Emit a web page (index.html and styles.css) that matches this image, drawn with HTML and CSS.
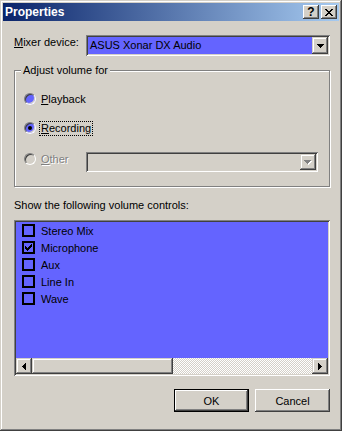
FILE: index.html
```html
<!DOCTYPE html>
<html lang="en">
<head>
    <meta charset="UTF-8">
    <title>Properties</title>
    <link rel="stylesheet" href="styles.css">
</head>
<body>
<div class="window">
    <div class="titlebar">
        <span class="title">Properties</span>
        <div class="caption-buttons">
            <div class="cap-btn">?</div>
            <div class="cap-btn">
                <svg width="8" height="7" viewBox="0 0 8 7"><path d="M0 0h2v1h-2z M6 0h2v1h-2z M1 1h2v1h-2z M5 1h2v1h-2z M2 2h4v1h-4z M3 3h2v1h-2z M2 4h4v1h-4z M1 5h2v1h-2z M5 5h2v1h-2z M0 6h2v1h-2z M6 6h2v1h-2z" fill="#000"/></svg>
            </div>
        </div>
    </div>

    <div class="content">
        <div class="mixer-row">
            <span class="mixer-label"><u>M</u>ixer device:</span>
            <div class="combo">
                <span class="combo-text">ASUS Xonar DX Audio</span>
                <span class="drop-btn">
                    <svg width="7" height="4" viewBox="0 0 7 4"><path d="M0 0h7v1h-1v1h-1v1h-1v1h-1v-1h-1v-1h-1v-1h-1z" fill="#000"/></svg>
                </span>
            </div>
        </div>

        <div class="group">
            <span class="legend">Adjust volume for</span>
            <div class="radio-row first">
                <span class="radio"></span>
                <span class="opt-label"><u>P</u>layback</span>
            </div>
            <div class="radio-row">
                <span class="radio checked"></span>
                <span class="opt-label focus"><u>R</u>ecording</span>
            </div>
            <div class="radio-row other">
                <div class="opt">
                    <span class="radio disabled"></span>
                    <span class="opt-label dim"><u>O</u>ther</span>
                </div>
                <div class="combo combo-off">
                    <span class="combo-text"></span>
                    <span class="drop-btn">
                        <svg width="8" height="5" viewBox="0 0 8 5"><path d="M1 1h7v1h-1v1h-1v1h-1v1h-1v-1h-1v-1h-1v-1h-1z" fill="#fff"/><path d="M0 0h7v1h-1v1h-1v1h-1v1h-1v-1h-1v-1h-1v-1h-1z" fill="#808080"/></svg>
                    </span>
                </div>
            </div>
        </div>

        <div class="list-caption">Show the following volume controls:</div>

        <div class="list">
            <div class="items">
                <div class="item"><span class="check"></span>Stereo Mix</div>
                <div class="item"><span class="check">
                    <svg width="7" height="7" viewBox="0 0 7 7"><path d="M6 0h1v1h-1z M5 1h2v1h-2z M0 2h1v1h-1z M4 2h3v1h-3z M0 3h2v1h-2z M3 3h3v1h-3z M0 4h5v1h-5z M1 5h3v1h-3z M2 6h1v1h-1z" fill="#000"/></svg>
                </span>Microphone</div>
                <div class="item"><span class="check"></span>Aux</div>
                <div class="item"><span class="check"></span>Line In</div>
                <div class="item"><span class="check"></span>Wave</div>
            </div>
            <div class="hscroll">
                <span class="sb-btn">
                    <svg width="4" height="7" viewBox="0 0 4 7"><path d="M0 3h1v-1h1v-1h1v-1h1v7h-1v-1h-1v-1h-1v-1h-1z" fill="#000"/></svg>
                </span>
                <span class="sb-thumb"></span>
                <span class="sb-track"></span>
                <span class="sb-btn">
                    <svg width="4" height="7" viewBox="0 0 4 7"><path d="M0 0h1v1h1v1h1v1h1v1h-1v1h-1v1h-1v1h-1z" fill="#000"/></svg>
                </span>
            </div>
        </div>

        <div class="buttons">
            <div class="btn default">OK</div>
            <div class="btn">Cancel</div>
        </div>
    </div>
</div>
</body>
</html>
```

FILE: styles.css
```css
body {
    margin: 0;
    background: #d4d0c8;
    font-family: "Liberation Sans", Arial, sans-serif;
    font-size: 11px;
    color: #000;
}

.window {
    width: 342px;
    height: 431px;
    box-sizing: border-box;
    padding: 3px;
    background: #d4d0c8;
    box-shadow: inset -1px -1px #404040, inset 1px 1px #d4d0c8,
                inset -2px -2px #808080, inset 2px 2px #fff;
    display: flex;
    flex-direction: column;
}

.titlebar {
    height: 18px;
    flex-shrink: 0;
    display: flex;
    align-items: center;
    justify-content: space-between;
    padding-left: 2px;
    background: linear-gradient(to right, #0a246a, #a6caf0);
}
.title {
    color: #fff;
    font-weight: bold;
    font-size: 12px;
}
.caption-buttons {
    display: flex;
    gap: 2px;
    margin-right: 2px;
}
.cap-btn {
    width: 16px;
    height: 14px;
    display: flex;
    align-items: center;
    justify-content: center;
    background: #d4d0c8;
    font-weight: bold;
    font-size: 12px;
    line-height: 12px;
    box-shadow: inset -1px -1px #404040, inset 1px 1px #fff,
                inset -2px -2px #808080, inset 2px 2px #d4d0c8;
}

.content {
    display: flex;
    flex-direction: column;
    padding: 14px 9px 0 11px;
}

/* mixer device */
.mixer-row {
    display: flex;
    height: 21px;
}
.mixer-label {
    width: 72px;
    line-height: 13px;
    margin-top: 1px;
}
.combo {
    width: 244px;
    height: 21px;
    box-sizing: border-box;
    padding: 2px;
    display: flex;
    box-shadow: inset 1px 1px #808080, inset -1px -1px #fff,
                inset 2px 2px #404040, inset -2px -2px #d4d0c8;
}
.combo-text {
    flex: 1;
    background: #6464ff;
    padding-left: 2px;
    line-height: 17px;
}
.drop-btn {
    width: 16px;
    height: 17px;
    display: flex;
    align-items: center;
    justify-content: center;
    background: #d4d0c8;
    box-shadow: inset -1px -1px #404040, inset 1px 1px #d4d0c8,
                inset -2px -2px #808080, inset 2px 2px #fff;
}
.combo-off {
    width: 232px;
    height: 20px;
}
.combo-off .combo-text {
    background: #d4d0c8;
}
.combo-off .drop-btn {
    height: 16px;
}

/* adjust volume group */
.group {
    margin-top: 14px;
    height: 117px;
    box-sizing: border-box;
    border: 1px solid #808080;
    box-shadow: inset 1px 1px #fff, 1px 1px #fff;
    display: flex;
    flex-direction: column;
}
.legend {
    align-self: flex-start;
    margin: -7px 0 0 6px;
    padding: 0 2px;
    line-height: 13px;
    background: #d4d0c8;
}
.radio-row {
    display: flex;
    align-items: center;
    height: 20px;
    padding-left: 9px;
    margin-top: 9px;
}
.radio-row.first {
    margin-top: 12px;
}
.radio-row.other {
    align-items: flex-start;
    margin-top: 14px;
}
.opt {
    width: 62px;
    height: 14px;
    display: flex;
    align-items: center;
}
.radio {
    width: 12px;
    height: 12px;
    box-sizing: border-box;
    border-radius: 50%;
    border: 1px solid;
    border-color: #808080 #fff #fff #808080;
    box-shadow: inset 1px 1px #404040, inset -1px -1px #d4d0c8;
    background: #6464ff;
    display: flex;
    align-items: center;
    justify-content: center;
    flex-shrink: 0;
}
.radio.checked::after {
    content: "";
    width: 4px;
    height: 4px;
    border-radius: 50%;
    background: #000;
}
.radio.disabled {
    background: #d4d0c8;
}
.opt-label {
    margin-left: 3px;
    padding: 0 1px;
    line-height: 13px;
    border: 1px solid transparent;
}
.opt-label.focus {
    border: 1px dotted #000;
}
.dim {
    color: #808080;
    text-shadow: 1px 1px #fff;
}

/* volume controls list */
.list-caption {
    margin-top: 12px;
    line-height: 13px;
}
.list {
    margin-top: 8px;
    height: 156px;
    box-sizing: border-box;
    padding: 2px;
    background: #6464ff;
    display: flex;
    flex-direction: column;
    box-shadow: inset 1px 1px #808080, inset -1px -1px #fff,
                inset 2px 2px #404040, inset -2px -2px #d4d0c8;
}
.items {
    flex: 1;
}
.item {
    height: 17px;
    display: flex;
    align-items: center;
    padding-left: 6px;
}
.check {
    width: 13px;
    height: 13px;
    box-sizing: border-box;
    border: 2px solid #000;
    margin-right: 6px;
    display: flex;
    align-items: center;
    justify-content: center;
}
.hscroll {
    height: 16px;
    display: flex;
}
.sb-btn,
.sb-thumb {
    background: #d4d0c8;
    box-shadow: inset -1px -1px #404040, inset 1px 1px #d4d0c8,
                inset -2px -2px #808080, inset 2px 2px #fff;
}
.sb-btn {
    width: 16px;
    display: flex;
    align-items: center;
    justify-content: center;
}
.sb-thumb {
    width: 141px;
}
.sb-track {
    flex: 1;
    background: repeating-conic-gradient(#fff 0 25%, #d4d0c8 0 50%) 0 0 / 2px 2px;
}

/* dialog buttons */
.buttons {
    margin-top: 13px;
    display: flex;
    justify-content: flex-end;
    gap: 6px;
}
.btn {
    width: 75px;
    height: 23px;
    box-sizing: border-box;
    display: flex;
    align-items: center;
    justify-content: center;
    background: #d4d0c8;
    box-shadow: inset -1px -1px #404040, inset 1px 1px #fff,
                inset -2px -2px #808080, inset 2px 2px #d4d0c8;
}
.btn.default {
    border: 1px solid #000;
}
```
